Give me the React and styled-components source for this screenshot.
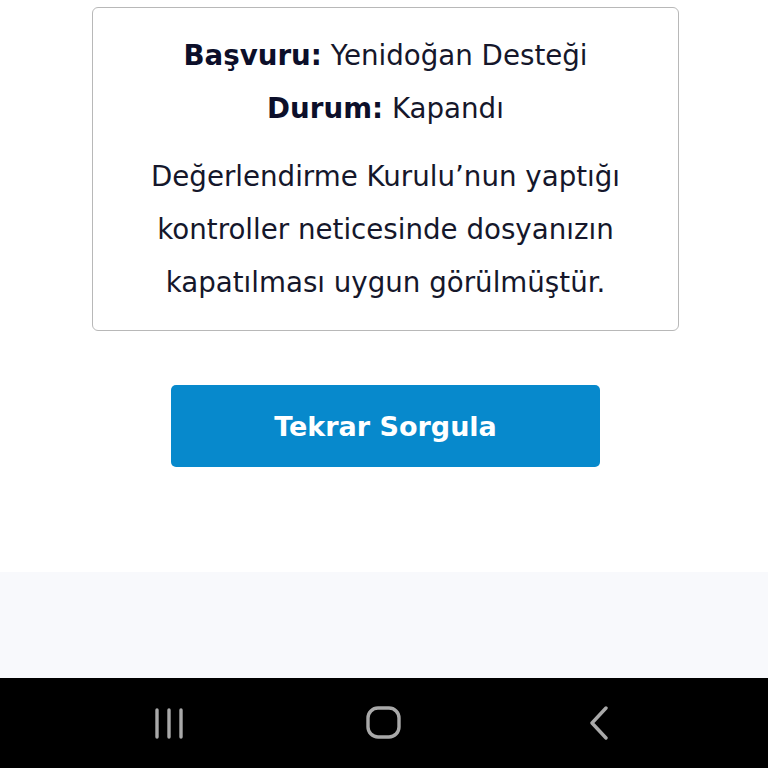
import styled, { createGlobalStyle } from "styled-components";

const GlobalStyle = createGlobalStyle`
  html, body {
    margin: 0;
    padding: 0;
    background: #ffffff;
  }
  body {
    font-family: "DejaVu Sans", "Noto Sans", sans-serif;
  }
`;

const Screen = styled.div`
  width: 768px;
  height: 768px;
  display: flex;
  flex-direction: column;
  overflow: hidden;
`;

const Main = styled.main`
  height: 572px;
  display: flex;
  flex-direction: column;
  align-items: center;
  padding: 7px 0 0 3px;
  box-sizing: border-box;
  background: #ffffff;
`;

const ResultCard = styled.section`
  width: 587px;
  box-sizing: border-box;
  border: 1px solid #b8b8b8;
  border-radius: 6px;
  padding: 21px 20px 21px;
  text-align: center;
  color: #15172b;
  font-size: 27.7px;
`;

const InfoLine = styled.div`
  line-height: 53px;
  b {
    font-weight: 700;
    color: #0c0f2a;
  }
`;

const Message = styled.p`
  margin: 15px 0 0;
  line-height: 53px;
`;

const QueryButton = styled.button`
  margin-top: 54px;
  width: 429px;
  height: 82px;
  border: none;
  border-radius: 5px;
  background: #0789cc;
  color: #ffffff;
  font-family: inherit;
  font-size: 27px;
  font-weight: 700;
  cursor: pointer;
`;

const Footer = styled.div`
  height: 106px;
  background: #f8f9fc;
`;

const NavBar = styled.nav`
  height: 90px;
  background: #000000;
  display: grid;
  grid-template-columns: repeat(3, 215px);
  justify-content: center;
  align-items: center;
  color: #a9a9a9;
`;

const NavSlot = styled.div`
  display: flex;
  justify-content: center;
  align-items: center;
`;

export default function App() {
  return (
    <>
      <GlobalStyle />
      <Screen>
        <Main>
          <ResultCard>
            <InfoLine>
              <b>Başvuru:</b> Yenidoğan Desteği
            </InfoLine>
            <InfoLine>
              <b>Durum:</b> Kapandı
            </InfoLine>
            <Message>
              Değerlendirme Kurulu’nun yaptığı
              <br />
              kontroller neticesinde dosyanızın
              <br />
              kapatılması uygun görülmüştür.
            </Message>
          </ResultCard>
          <QueryButton type="button">Tekrar Sorgula</QueryButton>
        </Main>
        <Footer />
        <NavBar>
          <NavSlot>
            <svg width="32" height="32" viewBox="0 0 32 32">
              <g stroke="currentColor" strokeWidth="3.4" strokeLinecap="round">
                <line x1="4" y1="3" x2="4" y2="30" />
                <line x1="16" y1="3" x2="16" y2="30" />
                <line x1="28" y1="3" x2="28" y2="30" />
              </g>
            </svg>
          </NavSlot>
          <NavSlot>
            <svg width="36" height="34" viewBox="0 0 36 34">
              <rect
                x="2"
                y="2"
                width="31"
                height="29"
                rx="10"
                fill="none"
                stroke="currentColor"
                strokeWidth="3.4"
              />
            </svg>
          </NavSlot>
          <NavSlot>
            <svg width="22" height="34" viewBox="0 0 22 34">
              <polyline
                points="18,2 4,17 18,32"
                fill="none"
                stroke="currentColor"
                strokeWidth="3.4"
                strokeLinecap="round"
                strokeLinejoin="round"
              />
            </svg>
          </NavSlot>
        </NavBar>
      </Screen>
    </>
  );
}
